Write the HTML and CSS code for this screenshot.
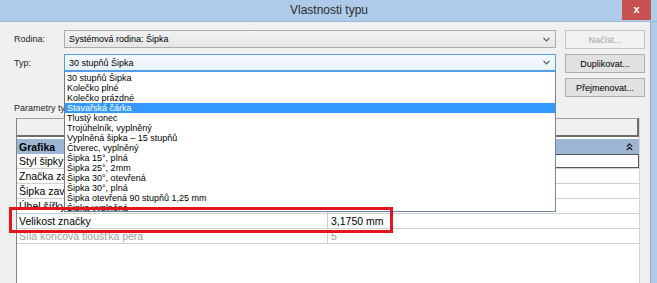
FILE: index.html
```html
<!DOCTYPE html>
<html lang="cs">
<head>
    <meta charset="UTF-8">
    <meta name="viewport" content="width=device-width, initial-scale=1.0">
    <title>Vlastnosti typu</title>
    <link rel="stylesheet" href="styles.css">
</head>
<body>
    <div class="window">
        <div class="titlebar">
            <span class="title">Vlastnosti typu</span>
            <span class="close">x</span>
        </div>
        <div class="frame">
            <div class="dialog">
                <div class="field-row">
                    <span class="label">Rodina:</span>
                    <div class="combo">
                        <span>Systémová rodina: Šipka</span>
                        <svg class="chevron" width="7" height="5" viewBox="0 0 7 5"><path d="M0.5 0.8 L3.5 3.8 L6.5 0.8" fill="none" stroke="#555" stroke-width="1.2"/></svg>
                    </div>
                    <button class="btn" disabled>Načíst...</button>
                </div>
                <div class="field-row">
                    <span class="label">Typ:</span>
                    <div class="combo combo-open">
                        <span>30 stupňů Šipka</span>
                        <svg class="chevron" width="7" height="5" viewBox="0 0 7 5"><path d="M0.5 0.8 L3.5 3.8 L6.5 0.8" fill="none" stroke="#555" stroke-width="1.2"/></svg>
                    </div>
                    <button class="btn">Duplikovat...</button>
                </div>
                <div class="field-row field-row-end">
                    <button class="btn">Přejmenovat...</button>
                </div>

                <div class="section-label">Parametry typu</div>

                <div class="grid">
                    <div class="grid-head"></div>
                    <div class="group">
                        <span>Grafika</span>
                        <svg width="7" height="8" viewBox="0 0 7 8"><path d="M0.8 3.6 L3.5 1 L6.2 3.6 M0.8 7 L3.5 4.4 L6.2 7" fill="none" stroke="#222" stroke-width="1.3"/></svg>
                    </div>
                    <div class="param param-active"><span class="name">Styl šipky</span><span class="value"></span></div>
                    <div class="param"><span class="name">Značka zaškrtnutí na středu</span><span class="value"></span></div>
                    <div class="param"><span class="name">Šipka zavřená</span><span class="value"></span></div>
                    <div class="param"><span class="name">Úhel šířky šipky</span><span class="value"></span></div>
                    <div class="param"><span class="name">Velikost značky</span><span class="value">3,1750 mm</span></div>
                    <div class="param param-off"><span class="name">Síla koncová tloušťka pera</span><span class="value">5</span></div>
                </div>

                <ul class="dropdown">
                    <li>30 stupňů Šipka</li>
                    <li>Kolečko plné</li>
                    <li>Kolečko prázdné</li>
                    <li class="selected">Stavařská čárka</li>
                    <li>Tlustý konec</li>
                    <li>Trojúhelník, vyplněný</li>
                    <li>Vyplněná šipka – 15 stupňů</li>
                    <li>Čtverec, vyplněný</li>
                    <li>Šipka 15°, plná</li>
                    <li>Šipka 25°, 2mm</li>
                    <li>Šipka 30°, otevřená</li>
                    <li>Šipka 30°, plná</li>
                    <li>Šipka otevřená 90 stupňů 1,25 mm</li>
                    <li>Šipka vyplněná</li>
                </ul>

                <div class="callout"></div>
            </div>
        </div>
    </div>
</body>
</html>
```

FILE: styles.css
```css
* {
    box-sizing: border-box;
}

body {
    margin: 0;
    padding: 0;
    width: 657px;
    height: 283px;
    overflow: hidden;
    font-family: "Liberation Sans", Arial, sans-serif;
    font-size: 9px;
    color: #000;
    background-color: #f0f0f0;
}

.window {
    display: flex;
    flex-direction: column;
    height: 283px;
}

.titlebar {
    display: flex;
    align-items: flex-start;
    height: 22px;
    background-color: #afcbea;
    border-bottom: 1px solid #9fb8d6;
}

.title {
    flex: 1;
    padding-left: 36px;
    line-height: 21px;
    text-align: center;
    font-size: 12px;
    color: #2b2b2b;
}

.close {
    width: 29px;
    height: 20px;
    margin-right: 6px;
    background-color: #c75050;
    color: #fff;
    font-size: 11px;
    font-weight: bold;
    line-height: 18px;
    text-align: center;
}

.frame {
    flex: 1;
    display: flex;
    border-right: 6px solid #afcbea;
}

.dialog {
    position: relative;
    flex: 1;
    display: flex;
    flex-direction: column;
    padding: 8px 5px 0 14px;
    border-right: 1px solid #8ea7c4;
}

.field-row {
    display: flex;
    align-items: flex-start;
    height: 19px;
    margin-bottom: 5px;
}

.field-row-end {
    justify-content: flex-end;
}

.label {
    width: 50px;
    line-height: 18px;
    color: #1e1e1e;
}

.combo {
    display: flex;
    align-items: center;
    justify-content: space-between;
    width: 492px;
    height: 18px;
    padding: 0 5px 0 4px;
    border: 1px solid #acacac;
    background: linear-gradient(#f2f2f2, #e6e6e6);
}

.combo-open {
    height: 17px;
    border-color: #569de5;
    background: linear-gradient(#f6fafe, #e8f1fb);
}

.btn {
    width: 80px;
    height: 19px;
    margin-left: 9px;
    padding: 0;
    font-family: inherit;
    font-size: 9px;
    color: #000;
    border: 1px solid #adadad;
    background-color: #e1e1e1;
}

.btn:disabled {
    color: #a3a3a3;
    border-color: #c4c4c4;
    background-color: #f2f2f2;
}

.section-label {
    margin-top: 0;
    line-height: 12px;
    color: #1e1e1e;
}

.grid {
    flex: 1;
    margin: 4px 5px 0 2px;
    background-color: #fff;
    border-left: 1px solid #7d8590;
    border-right: 1px solid #d5d5d5;
    font-size: 10.5px;
}

.grid-head {
    height: 19px;
    margin-bottom: 2px;
    background-color: #f0f0f0;
    border-top: 1px solid #a0a0a0;
    border-right: 2px solid #6d6d6d;
    border-bottom: 2px solid #6d6d6d;
}

.group {
    display: flex;
    align-items: center;
    justify-content: space-between;
    height: 15px;
    padding: 0 6px 0 2px;
    background-color: #9cb6d3;
    font-weight: bold;
}

.param {
    display: flex;
    height: 15px;
    border-bottom: 1px solid #d0d0d0;
    line-height: 14px;
}

.name {
    width: 310px;
    padding-left: 2px;
    white-space: nowrap;
    overflow: hidden;
}

.value {
    flex: 1;
    padding-left: 3px;
    border-left: 1px solid #d0d0d0;
}

.param-active .value {
    border: 1px solid #555;
}

.param-off {
    color: #a0a0a0;
}

.dropdown {
    position: absolute;
    left: 64px;
    top: 49px;
    width: 492px;
    height: 141px;
    margin: 0;
    padding: 1px 0 0;
    list-style: none;
    overflow: hidden;
    background-color: #fff;
    border: 1px solid #7a7a7a;
    border-top-color: #569de5;
    border-right-color: #6f86a4;
    border-bottom-color: #6f86a4;
    font-size: 9px;
}

.dropdown li {
    height: 10px;
    padding-left: 2px;
    line-height: 10px;
    white-space: nowrap;
}

.dropdown .selected {
    background-color: #3399ff;
    color: #fff;
}

.callout {
    position: absolute;
    left: 9px;
    top: 185px;
    width: 384px;
    height: 26px;
    border: 3px solid #e3161f;
}
```
